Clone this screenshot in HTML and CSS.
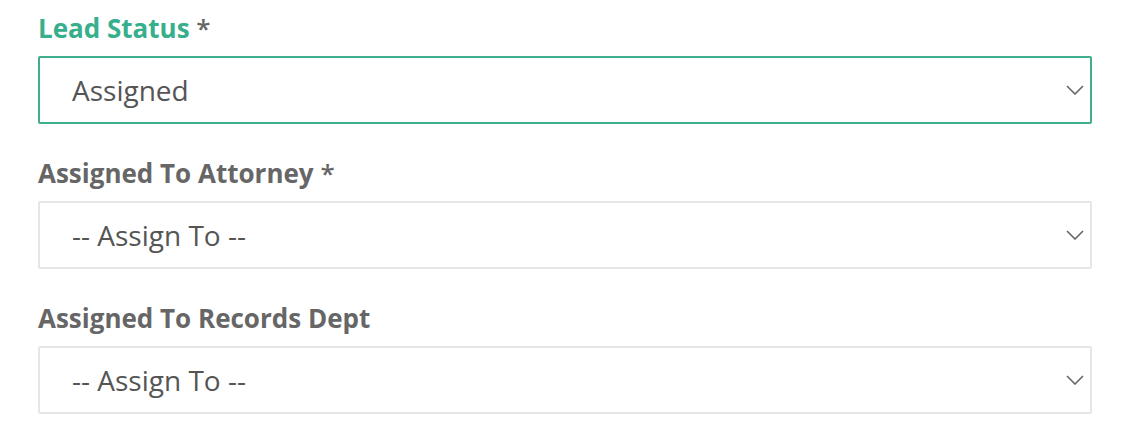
FILE: index.html
```html
<!DOCTYPE html>
<html lang="en">
<head>
  <meta charset="UTF-8" />
  <meta name="viewport" content="width=device-width, initial-scale=1.0"/>
  <title>Lead Assignment</title>
  <link rel="stylesheet" href="styles.css">
</head>
<body>
  <form class="lead-form">
    <!-- Lead status (focused) -->
    <div class="form-group active">
      <label for="lead-status">Lead Status <span class="req">*</span></label>
      <div class="select-wrap">
        <select id="lead-status">
          <option>Assigned</option>
        </select>
        <svg class="chevron" width="18" height="10" viewBox="0 0 18 10"><path d="M1 1 L9 9 L17 1" fill="none" stroke="#666" stroke-width="1.6"/></svg>
      </div>
    </div>

    <div class="form-group">
      <label for="attorney">Assigned To Attorney <span class="req">*</span></label>
      <div class="select-wrap">
        <select id="attorney">
          <option>-- Assign To --</option>
        </select>
        <svg class="chevron" width="18" height="10" viewBox="0 0 18 10"><path d="M1 1 L9 9 L17 1" fill="none" stroke="#666" stroke-width="1.6"/></svg>
      </div>
    </div>

    <div class="form-group">
      <label for="records">Assigned To Records Dept</label>
      <div class="select-wrap">
        <select id="records">
          <option>-- Assign To --</option>
        </select>
        <svg class="chevron" width="18" height="10" viewBox="0 0 18 10"><path d="M1 1 L9 9 L17 1" fill="none" stroke="#666" stroke-width="1.6"/></svg>
      </div>
    </div>
  </form>
</body>
</html>
```

FILE: styles.css
```css
body {
  margin: 0;
  font-family: 'Open Sans', sans-serif;
  background-color: #ffffff;
  color: #555555;
}

.lead-form {
  padding: 10px 36px 0 38px;
}

.form-group {
  margin-bottom: 31px;
}

.form-group label {
  display: block;
  font-size: 26px;
  line-height: 36px;
  font-weight: 700;
  color: #666666;
  margin-bottom: 10px;
}

.form-group label .req {
  font-weight: 600;
}

.form-group.active label {
  color: #37ae8c;
}

.form-group.active label .req {
  color: #666666;
}

.select-wrap {
  position: relative;
}

select {
  appearance: none;
  -webkit-appearance: none;
  display: block;
  width: 100%;
  height: 68px;
  box-sizing: border-box;
  padding: 0 60px 0 32px;
  font-family: 'Open Sans', sans-serif;
  font-size: 28px;
  color: #555555;
  background-color: #ffffff;
  border: 2px solid #e6e6e6;
  border-radius: 2px;
  outline: none;
}

.form-group.active select {
  border-color: #40ad8e;
}

.chevron {
  position: absolute;
  right: 8px;
  top: 29px;
  pointer-events: none;
}
```
